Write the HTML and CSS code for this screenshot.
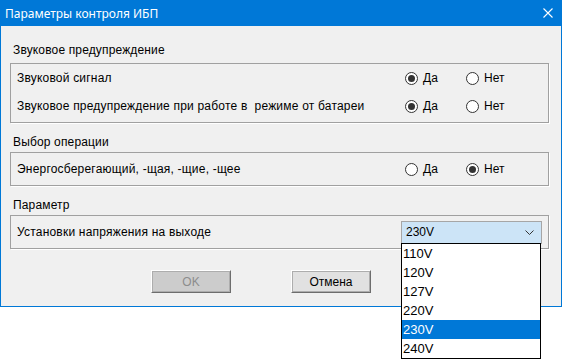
FILE: index.html
```html
<!DOCTYPE html>
<html lang="ru">
<head>
    <meta charset="UTF-8">
    <title>Параметры контроля ИБП</title>
    <link rel="stylesheet" href="styles.css">
</head>
<body>
    <div class="window">
        <div class="titlebar">
            <span class="title">Параметры контроля ИБП</span>
            <svg class="close" width="10" height="10" viewBox="0 0 10 10">
                <path d="M0.5 0.5 L9.5 9.5 M9.5 0.5 L0.5 9.5" stroke="#fff" stroke-width="1.1" fill="none"/>
            </svg>
        </div>

        <div class="content">
            <!-- Звук -->
            <div class="group-label first">Звуковое предупреждение</div>
            <div class="group sound">
                <div class="row">
                    <span class="row-label">Звуковой сигнал</span>
                    <div class="radios">
                        <span class="radio checked"><span class="dot"></span>Да</span>
                        <span class="radio"><span class="dot"></span>Нет</span>
                    </div>
                </div>
                <div class="row">
                    <span class="row-label">Звуковое предупреждение при работе в&nbsp; режиме от батареи</span>
                    <div class="radios">
                        <span class="radio checked"><span class="dot"></span>Да</span>
                        <span class="radio"><span class="dot"></span>Нет</span>
                    </div>
                </div>
            </div>

            <!-- Операция -->
            <div class="group-label">Выбор операции</div>
            <div class="group">
                <div class="row single">
                    <span class="row-label">Энергосберегающий, -щая, -щие, -щее</span>
                    <div class="radios">
                        <span class="radio"><span class="dot"></span>Да</span>
                        <span class="radio checked"><span class="dot"></span>Нет</span>
                    </div>
                </div>
            </div>

            <!-- Параметр -->
            <div class="group-label">Параметр</div>
            <div class="group">
                <div class="row single">
                    <span class="row-label">Установки напряжения на выходе</span>
                    <div class="combo">
                        <span>230V</span>
                        <svg class="chevron" width="9" height="5" viewBox="0 0 9 5">
                            <path d="M0.5 0.5 L4.5 4.5 L8.5 0.5" stroke="#333" stroke-width="1" fill="none"/>
                        </svg>
                        <ul class="combo-list">
                            <li>110V</li>
                            <li>120V</li>
                            <li>127V</li>
                            <li>220V</li>
                            <li class="selected">230V</li>
                            <li>240V</li>
                        </ul>
                    </div>
                </div>
            </div>

            <div class="buttons">
                <button class="btn" disabled>OK</button>
                <button class="btn">Отмена</button>
            </div>
        </div>
    </div>
</body>
</html>
```

FILE: styles.css
```css
html, body {
    height: 100%;
}
body {
    margin: 0;
    min-height: 359px;
    background: #fff;
    font-family: 'Liberation Sans', Arial, sans-serif;
    font-size: 12px;
    color: #000;
}
.window {
    box-sizing: border-box;
    width: 562px;
    height: 307px;
    border: 1px solid #0078d7;
    border-top: none;
    background: #f0f0f0;
}
.titlebar {
    height: 26px;
    background: #0078d7;
    color: #fff;
    display: flex;
    align-items: center;
    justify-content: space-between;
    padding: 0 8px 0 4px;
}
.title {
    font-family: 'Noto Sans', sans-serif;
    font-size: 12px;
}
.content {
    padding: 0 12px 0 9px;
}
.group-label {
    line-height: 20px;
    padding-left: 3px;
    margin-top: 9px;
    letter-spacing: 0.15px;
}
.group-label.first {
    margin-top: 14px;
    margin-bottom: 3px;
}
.group {
    border: 1px solid #a0a0a0;
    box-shadow: 1px 1px 0 #fff;
}
.group.sound {
    padding-bottom: 2px;
}
.row {
    display: flex;
    align-items: center;
    height: 28px;
    padding-left: 6px;
}
.row.single {
    height: 32px;
}
.row-label {
    flex: 1;
    letter-spacing: 0.2px;
}
.radios {
    display: flex;
    width: 122px;
    margin-right: 21px;
}
.radio {
    display: flex;
    align-items: center;
    width: 61px;
}
.radio .dot {
    box-sizing: border-box;
    width: 13px;
    height: 13px;
    border: 1px solid #333;
    border-radius: 50%;
    background: #fff;
    margin-right: 5px;
    display: flex;
    align-items: center;
    justify-content: center;
}
.radio.checked .dot::after {
    content: '';
    width: 7px;
    height: 7px;
    border-radius: 50%;
    background: #333;
}
.combo {
    position: relative;
    box-sizing: border-box;
    width: 141px;
    height: 23px;
    margin-right: 6px;
    border: 1px solid #a6a6a6;
    background: #cce4f7;
    display: flex;
    align-items: center;
    justify-content: space-between;
    padding: 0 7px 0 4px;
}
.combo-list {
    position: absolute;
    top: 100%;
    left: -1px;
    width: 140px;
    box-sizing: border-box;
    margin: 0;
    padding: 0;
    list-style: none;
    background: #fff;
    border: 1px solid #000;
    font-size: 13px;
    z-index: 2;
}
.combo-list li {
    height: 19px;
    line-height: 19px;
    padding-left: 1px;
}
.combo-list li.selected {
    background: #0078d7;
    color: #fff;
}
.buttons {
    display: flex;
    gap: 60px;
    padding-left: 141px;
    margin-top: 21px;
}
.btn {
    box-sizing: border-box;
    width: 80px;
    height: 23px;
    font-family: 'Liberation Sans', Arial, sans-serif;
    font-size: 12px;
    color: #000;
    background: #e1e1e1;
    border: 1px solid;
    border-color: #fff #6d6d6d #6d6d6d #fff;
    box-shadow: inset 0 0 0 1px #adadad;
    padding: 0;
}
.btn:disabled {
    background: #cccccc;
    color: #8d8d8d;
}
```
